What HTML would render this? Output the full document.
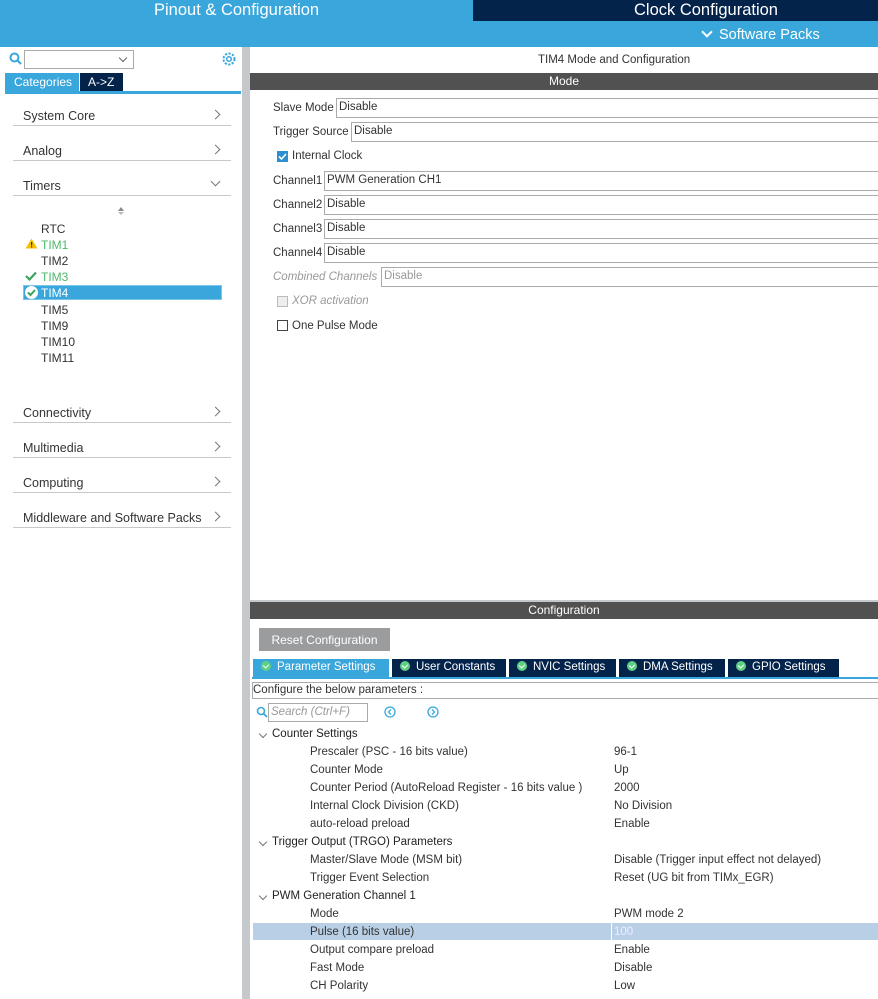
<!DOCTYPE html>
<html><head><style>
*{margin:0;padding:0;box-sizing:border-box}
body{width:878px;height:999px;overflow:hidden;background:#fff;font-family:"Liberation Sans",Arial,sans-serif;font-size:12px;color:#333;position:relative}
.a{position:absolute;white-space:nowrap}
.cat{position:absolute;left:13px;width:218px;height:35px;border-bottom:1px solid #c8c8c8;font-size:12.5px;color:#333}
.cat span{position:absolute;left:10px;bottom:2px}
.cat i{position:absolute;right:12px;bottom:7px;width:7px;height:7px;border-right:1px solid #777;border-top:1px solid #777;transform:rotate(45deg)}
.box{position:absolute;height:20px;border:1px solid #aaa;right:-2px;padding:2px 2px;font-size:11.5px;color:#333}
.lbl{position:absolute;font-size:11.5px;color:#333}
.tab{position:absolute;top:659px;height:18px;background:#03234b;color:#fff;font-size:11.5px;padding:2px 0 0 8px}
.tab b{display:inline-block;width:10px;height:10px;border-radius:50%;background:#5fcf86;margin-right:6px;vertical-align:-1px;position:relative}
.tab b:after{content:"";position:absolute;left:3px;top:2px;width:3px;height:4px;border-right:1.5px solid #fff;border-bottom:1.5px solid #fff;transform:rotate(45deg)}
.pr{position:absolute;left:310px;font-size:11.5px;color:#333}
.pv{position:absolute;left:614px;font-size:11.5px;color:#333}
.sec{position:absolute;left:272px;font-size:11.5px;color:#222}
.sec:before{content:"";position:absolute;left:-12px;top:3px;width:5px;height:5px;border-right:1px solid #777;border-bottom:1px solid #777;transform:rotate(45deg)}
</style></head><body>
<div class="a" style="left:0;top:0;width:878px;height:47px;background:#39a7dc"></div>
<div class="a" style="left:473px;top:0;width:405px;height:21px;background:#03234b"></div>
<div class="a" style="left:154px;top:1px;font-size:16.5px;color:#fff">Pinout &amp; Configuration</div>
<div class="a" style="left:634px;top:1px;font-size:16.5px;color:#fff">Clock Configuration</div>
<div class="a" style="left:703px;top:28px;width:8px;height:8px;border-right:2px solid #fff;border-bottom:2px solid #fff;transform:rotate(45deg)"></div>
<div class="a" style="left:719px;top:27px;font-size:14.5px;color:#fff">Software Packs</div>

<div class="a" style="left:242px;top:47px;width:8px;height:952px;background:#c6c9cc"></div>
<svg class="a" style="left:9px;top:52px" width="14" height="14"><circle cx="5.5" cy="5.5" r="4" fill="none" stroke="#39a7dc" stroke-width="2"/><line x1="8.5" y1="8.5" x2="12" y2="12" stroke="#39a7dc" stroke-width="2"/></svg>
<div class="a" style="left:24px;top:50px;width:110px;height:19px;border:1px solid #aaa"></div>
<div class="a" style="left:120px;top:55px;width:6px;height:6px;border-right:1px solid #666;border-bottom:1px solid #666;transform:rotate(45deg)"></div>
<svg class="a" style="left:221px;top:51px" width="16" height="16" viewBox="0 0 16 16"><circle cx="8" cy="8" r="5.5" fill="none" stroke="#39a7dc" stroke-width="2" stroke-dasharray="2.2 1.4"/><circle cx="8" cy="8" r="2.3" fill="none" stroke="#39a7dc" stroke-width="1.5"/></svg>
<div class="a" style="left:5px;top:73px;width:74px;height:18px;background:#39a7dc;color:#fff;font-size:12px;padding:2px 0 0 9px">Categories</div>
<div class="a" style="left:80px;top:73px;width:43px;height:18px;background:#03234b;color:#fff;font-size:12px;padding:2px 0 0 8px">A-&gt;Z</div>
<div class="a" style="left:5px;top:91px;width:236px;height:3px;background:#39a7dc"></div>
<div class="cat" style="top:91px"><span>System Core</span><i></i></div>
<div class="cat" style="top:126px"><span>Analog</span><i></i></div>
<div class="cat" style="top:161px"><span>Timers</span><i style="transform:rotate(135deg);bottom:10px"></i></div>
<div class="a" style="left:118px;top:207px;border:3px solid transparent;border-bottom:4px solid #888;border-top:0"></div>
<div class="a" style="left:118px;top:212px;border:3px solid transparent;border-top:3px solid #bbb;border-bottom:0"></div>
<div class="a" style="left:41px;top:222px">RTC</div>
<svg class="a" style="left:25px;top:238px" width="13" height="11"><path d="M6.5 0.5 L12.5 10.5 L0.5 10.5Z" fill="#f6c200"/><rect x="6" y="4" width="1.2" height="3.5" fill="#333"/><rect x="6" y="8.3" width="1.2" height="1.2" fill="#333"/></svg>
<div class="a" style="left:41px;top:238px;color:#4cb86a">TIM1</div>
<div class="a" style="left:41px;top:254px">TIM2</div>
<svg class="a" style="left:25px;top:271px" width="12" height="10"><path d="M1 5 L4.5 8.5 L11 1.5" fill="none" stroke="#3aa55a" stroke-width="2.2"/></svg>
<div class="a" style="left:41px;top:270px;color:#4cb86a">TIM3</div>
<div class="a" style="left:23px;top:285px;width:199px;height:15px;background:#39a7dc;border:1px solid #7cc5ea"></div>
<svg class="a" style="left:24px;top:285px" width="15" height="15"><circle cx="7.5" cy="7.5" r="6.5" fill="#fff"/><path d="M4 7.5 L6.5 10 L11 5" fill="none" stroke="#3aa55a" stroke-width="2"/></svg>
<div class="a" style="left:41px;top:286px;color:#fff">TIM4</div>
<div class="a" style="left:41px;top:303px">TIM5</div>
<div class="a" style="left:41px;top:319px">TIM9</div>
<div class="a" style="left:41px;top:335px">TIM10</div>
<div class="a" style="left:41px;top:351px">TIM11</div>
<div class="cat" style="top:388px"><span>Connectivity</span><i></i></div>
<div class="cat" style="top:423px"><span>Multimedia</span><i></i></div>
<div class="cat" style="top:458px"><span>Computing</span><i></i></div>
<div class="cat" style="top:493px"><span>Middleware and Software Packs</span><i></i></div>

<div class="a" style="left:538px;top:54px;font-size:11.5px;color:#333">TIM4 Mode and Configuration</div>
<div class="a" style="left:250px;top:73px;width:628px;height:17px;background:#505150;color:#fff;font-size:12px;text-align:center;padding-top:1px">Mode</div>
<div class="lbl" style="left:273px;top:102px">Slave Mode</div><div class="box" style="left:336px;top:98px">Disable</div>
<div class="lbl" style="left:273px;top:126px">Trigger Source</div><div class="box" style="left:351px;top:122px">Disable</div>
<div class="a" style="left:277px;top:151px;width:11px;height:11px;background:#2d8fd0"></div>
<svg class="a" style="left:277px;top:151px" width="11" height="11"><path d="M2 5.5 L4.5 8 L9 3" fill="none" stroke="#fff" stroke-width="1.6"/></svg>
<div class="lbl" style="left:292px;top:150px">Internal Clock</div>
<div class="lbl" style="left:273px;top:175px">Channel1</div><div class="box" style="left:324px;top:171px">PWM Generation CH1</div>
<div class="lbl" style="left:273px;top:199px">Channel2</div><div class="box" style="left:324px;top:195px">Disable</div>
<div class="lbl" style="left:273px;top:223px">Channel3</div><div class="box" style="left:324px;top:219px">Disable</div>
<div class="lbl" style="left:273px;top:247px">Channel4</div><div class="box" style="left:324px;top:243px">Disable</div>
<div class="lbl" style="left:273px;top:271px;color:#999;font-style:italic">Combined Channels</div><div class="box" style="left:381px;top:267px;color:#999">Disable</div>
<div class="a" style="left:277px;top:296px;width:11px;height:11px;border:1px solid #bbb;background:#eee"></div>
<div class="lbl" style="left:292px;top:295px;color:#999;font-style:italic">XOR activation</div>
<div class="a" style="left:277px;top:320px;width:11px;height:11px;border:1px solid #444"></div>
<div class="lbl" style="left:292px;top:320px">One Pulse Mode</div>

<div class="a" style="left:250px;top:600px;width:628px;height:2px;background:#c6c9cc"></div>
<div class="a" style="left:250px;top:602px;width:628px;height:17px;background:#505150;color:#fff;font-size:12px;text-align:center;padding-top:1px">Configuration</div>
<div class="a" style="left:259px;top:628px;width:131px;height:23px;background:#9a9c9e;color:#fff;font-size:12px;text-align:center;padding-top:5px">Reset Configuration</div>
<div class="tab" style="left:253px;width:136px;background:#39a7dc"><b></b>Parameter Settings</div>
<div class="tab" style="left:392px;width:114px"><b></b>User Constants</div>
<div class="tab" style="left:509px;width:107px"><b></b>NVIC Settings</div>
<div class="tab" style="left:619px;width:106px"><b></b>DMA Settings</div>
<div class="tab" style="left:728px;width:111px"><b></b>GPIO Settings</div>
<div class="a" style="left:252px;top:677px;width:626px;height:2px;background:#39a7dc"></div>
<div class="a" style="left:252px;top:682px;width:630px;height:17px;border:1px solid #aaa;font-size:11.5px;padding:1px 0 0 0">Configure the below parameters :</div>
<svg class="a" style="left:256px;top:706px" width="12" height="12"><circle cx="5" cy="5" r="3.5" fill="none" stroke="#39a7dc" stroke-width="1.6"/><line x1="7.5" y1="7.5" x2="11" y2="11" stroke="#39a7dc" stroke-width="1.8"/></svg>
<div class="a" style="left:268px;top:703px;width:100px;height:19px;border:1px solid #aaa;color:#999;font-style:italic;padding:2px 2px;font-size:11.5px">Search (Ctrl+F)</div>
<svg class="a" style="left:384px;top:706px" width="12" height="12"><circle cx="6" cy="6" r="5" fill="none" stroke="#39a7dc" stroke-width="1.3"/><path d="M7 3.5 L4.5 6 L7 8.5" fill="none" stroke="#39a7dc" stroke-width="1.3"/></svg>
<svg class="a" style="left:427px;top:706px" width="12" height="12"><circle cx="6" cy="6" r="5" fill="none" stroke="#39a7dc" stroke-width="1.3"/><path d="M5 3.5 L7.5 6 L5 8.5" fill="none" stroke="#39a7dc" stroke-width="1.3"/></svg>

<div class="sec" style="top:728px">Counter Settings</div>
<div class="pr" style="top:746px">Prescaler (PSC - 16 bits value)</div><div class="pv" style="top:746px">96-1</div>
<div class="pr" style="top:764px">Counter Mode</div><div class="pv" style="top:764px">Up</div>
<div class="pr" style="top:782px">Counter Period (AutoReload Register - 16 bits value )</div><div class="pv" style="top:782px">2000</div>
<div class="pr" style="top:800px">Internal Clock Division (CKD)</div><div class="pv" style="top:800px">No Division</div>
<div class="pr" style="top:818px">auto-reload preload</div><div class="pv" style="top:818px">Enable</div>
<div class="sec" style="top:836px">Trigger Output (TRGO) Parameters</div>
<div class="pr" style="top:854px">Master/Slave Mode (MSM bit)</div><div class="pv" style="top:854px">Disable (Trigger input effect not delayed)</div>
<div class="pr" style="top:872px">Trigger Event Selection</div><div class="pv" style="top:872px">Reset (UG bit from TIMx_EGR)</div>
<div class="sec" style="top:890px">PWM Generation Channel 1</div>
<div class="pr" style="top:908px">Mode</div><div class="pv" style="top:908px">PWM mode 2</div>
<div class="a" style="left:253px;top:923px;width:625px;height:17px;background:#b8cfe5"></div>
<div class="a" style="left:611px;top:923px;width:1px;height:17px;background:#fff"></div>
<div class="pr" style="top:926px">Pulse (16 bits value)</div><div class="pv" style="top:926px;color:#eef">100</div>
<div class="pr" style="top:944px">Output compare preload</div><div class="pv" style="top:944px">Enable</div>
<div class="pr" style="top:962px">Fast Mode</div><div class="pv" style="top:962px">Disable</div>
<div class="pr" style="top:980px">CH Polarity</div><div class="pv" style="top:980px">Low</div>
</body></html>
